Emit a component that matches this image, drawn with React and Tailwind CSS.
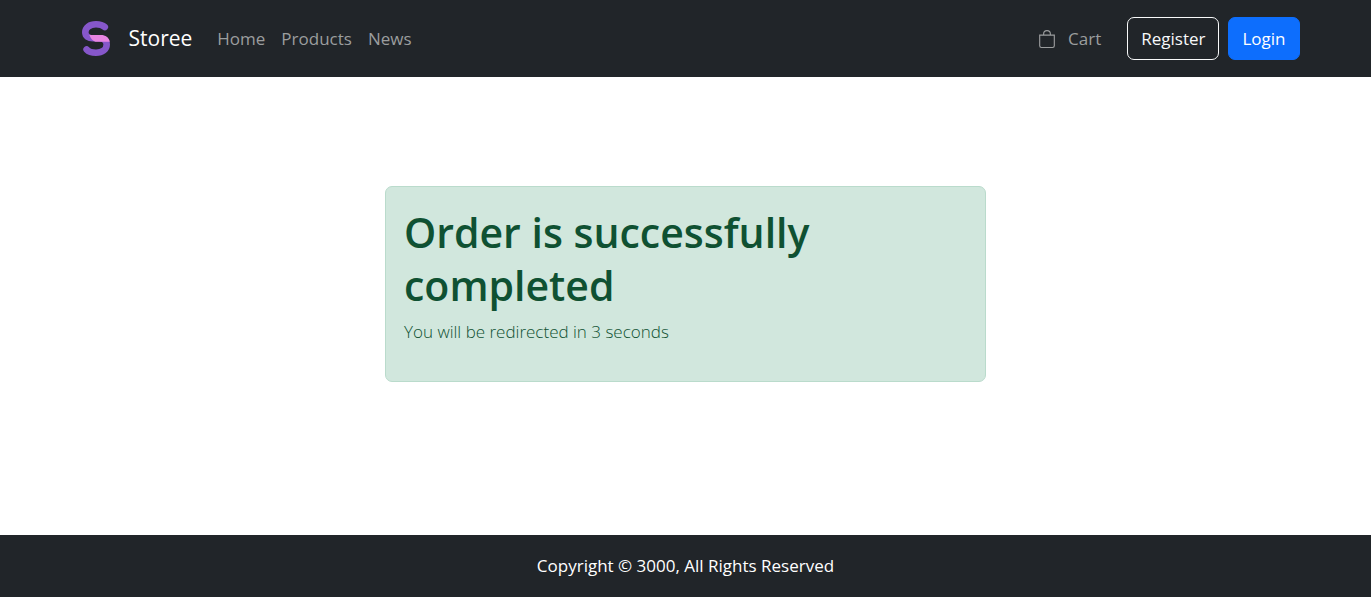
import { BsBag } from "react-icons/bs";

const links = ["Home", "Products", "News"];

function Logo() {
  return (
    <svg viewBox="0 0 28 35" className="h-[35px] w-7" aria-hidden="true">
      <path
        d="M22.8 6C20.8 4.2 17.8 3.3 14 3.3C7.6 3.3 3.3 6.6 3.3 11.2C3.3 15.4 6.6 17.3 11 17.3H17C21.6 17.3 24.7 19.6 24.7 23.6C24.7 28.4 20.4 31.7 14 31.7C10 31.7 6.8 30.8 4.6 28.4"
        fill="none"
        stroke="#8657ca"
        strokeWidth="6.6"
        strokeLinecap="round"
      />
      <path d="M7.4 14H18.6C23.6 14 27 16.4 27.8 20.8H13.4C10.6 19.6 8.4 17.2 7.4 14Z" fill="#e885e2" />
    </svg>
  );
}

export default function App() {
  return (
    <div className="flex min-h-screen flex-col bg-white font-['Open_Sans','Noto_Sans',sans-serif] text-[17px] leading-[26px] text-[#212529]">
      <header className="bg-[#212529]">
        <nav className="mx-auto flex max-w-[1254px] items-center px-[13px] py-[17px] leading-[25px]">
          <a href="#" className="flex items-center pl-[10px] text-[21px] text-white">
            <Logo />
            <span className="pl-[19px]">Storee</span>
          </a>
          <ul className="flex gap-4 pl-[25px]">
            {links.map((label) => (
              <li key={label}>
                <a href="#" className="text-[#9b9d9e]">{label}</a>
              </li>
            ))}
          </ul>
          <div className="ml-auto flex items-center">
            <a href="#" className="mr-[26px] flex items-center gap-3 text-[#9b9d9e]">
              <BsBag className="size-[18px]" />
              Cart
            </a>
            <button type="button" className="mr-[9px] rounded-[7px] border border-[#f8f9fa] px-[13px] py-2 text-[#f8f9fa]">
              Register
            </button>
            <button type="button" className="rounded-[7px] border border-[#0d6efd] bg-[#0d6efd] px-[13px] py-2 text-white">
              Login
            </button>
          </div>
        </nav>
      </header>
      <main className="mx-auto w-full max-w-[1254px] grow pt-[109px] pb-[153px]">
        <div className="mx-auto w-1/2 px-[13px]">
          <div role="alert" className="rounded-[7px] border border-[#badbcc] bg-[#d1e7dd] px-[18px] pt-[19px] pb-9 text-[#0f5132]">
            <h1 className="mb-[7px] text-[41px] leading-[53px] font-semibold">Order is successfully completed</h1>
            <p className="font-light">You will be redirected in 3 seconds</p>
          </div>
        </div>
      </main>
      <footer className="bg-[#212529] py-[18px] text-center text-white">
        Copyright © 3000, All Rights Reserved
      </footer>
    </div>
  );
}
